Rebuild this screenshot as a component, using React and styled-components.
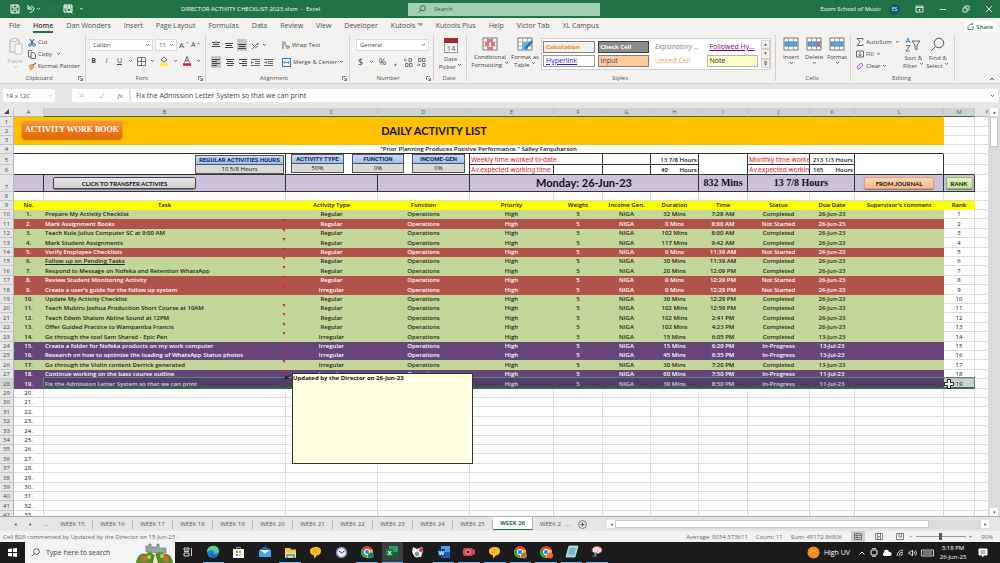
import React from "react";
import styled, { createGlobalStyle } from "styled-components";

/* ===== Global ===== */
const GlobalStyle = createGlobalStyle`
  * {
    box-sizing: border-box;
  }
  body {
    margin: 0;
    font-family: "Open Sans", "Noto Sans", sans-serif;
    font-size: 6px;
    line-height: 8px;
    color: #444;
  }
  button, input, select {
    font: inherit;
    color: inherit;
    padding: 0;
    margin: 0;
    border: none;
    background: none;
  }
  button {
    white-space: nowrap;
  }
`;

const Page = styled.div`
  display: flex;
  flex-direction: column;
  height: 100vh;
  background: #e6e6e6;
  overflow: hidden;
`;

/* ===== Title bar ===== */
const TitleBar = styled.header`
  display: grid;
  grid-template-columns: 9fr 11fr 3fr 7fr 10fr;
  flex: none;
  height: 18px;
  background: #217346;
  color: #fff;
  align-items: center;
`;

const QuickAccess = styled.div`
  display: flex;
  align-items: center;
  grid-column: 1;
  grid-row: 1;
  gap: 6px;
  padding-left: 10px;
`;

const FileName = styled.h1`
  grid-column: 1 / 4;
  grid-row: 1;
  margin: 0;
  padding-left: 181px;
  font-size: 6px;
  font-weight: 400;
  white-space: nowrap;
`;

const SearchBox = styled.label`
  display: flex;
  align-items: center;
  grid-column: 1 / 6;
  grid-row: 1;
  width: 192px;
  height: 13px;
  margin-left: 408px;
  padding-left: 10px;
  gap: 8px;
  background: #9fd0b3;
  color: #1d5c3a;

  input {
    width: 120px;
    font-size: 6px;
  }
  input::placeholder {
    color: #1d5c3a;
    opacity: 1;
  }
`;

const Account = styled.div`
  display: flex;
  grid-column: 5;
  grid-row: 1;
  justify-content: flex-end;
  align-items: center;
  gap: 15px;
  padding-right: 7px;
  white-space: nowrap;
`;

const User = styled.span`
  display: flex;
  align-items: center;
  gap: 8px;
`;

const Avatar = styled.span`
  width: 11px;
  height: 11px;
  border-radius: 50%;
  background: #0b5c6b;
  font-size: 5px;
  line-height: 11px;
  text-align: center;
`;

const IconButton = styled.button`
  display: flex;
  align-items: center;
  justify-content: center;
`;

/* ===== Ribbon ===== */
const TabStrip = styled.nav`
  display: flex;
  align-items: center;
  flex: none;
  height: 17px;
  padding: 0 4px 0 9px;
  gap: 13px;
  background: #f3f2f1;
`;

const RibbonTab = styled.button`
  height: 13px;
  font-size: 7px;
  font-weight: ${(p) => (p.$active ? 600 : 400)};
  color: ${(p) => (p.$active ? "#333" : "#4d4d4d")};
  border-bottom: 2px solid ${(p) => (p.$active ? "#217346" : "transparent")};
`;

const ShareButton = styled.button`
  display: flex;
  align-items: center;
  gap: 2px;
  height: 11px;
  margin-left: auto;
  padding: 0 3px;
  background: #fff;
  font-size: 6px;
  font-weight: 600;
  color: #217346;
`;

const Ribbon = styled.div`
  display: flex;
  flex: none;
  height: 49px;
  background: #f3f2f1;
  border-bottom: 1px solid #d2d0ce;
`;

const Group = styled.section`
  display: flex;
  flex-direction: column;
  flex: none;
  width: ${(p) => p.$width}px;
  margin-bottom: 2px;
  border-right: 1px solid #d2d0ce;
`;

const GroupBody = styled.div`
  display: flex;
  flex: 1;
  gap: ${(p) => p.$gap || 4}px;
  padding: 0 ${(p) => p.$right || 2}px 0 ${(p) => p.$left || 6}px;
`;

const GroupFooter = styled.div`
  display: flex;
  justify-content: center;
  align-items: center;
  height: 6px;
  padding-right: 2px;
  color: #555;

  span {
    flex: 1;
    text-align: center;
  }
`;

const Stack = styled.div`
  display: flex;
  flex-direction: column;
  gap: ${(p) => p.$gap || 0}px;
  padding-top: ${(p) => p.$top || 0}px;
`;

const ToolRow = styled.div`
  display: flex;
  align-items: center;
  height: ${(p) => p.$height || 12}px;
  gap: ${(p) => p.$gap || 3}px;
`;

const Tool = styled.button`
  display: flex;
  align-items: center;
  justify-content: center;
  flex: none;
  gap: 2px;
  min-width: 9px;
  height: ${(p) => (p.$active ? 12 : 10)}px;
  padding: 0 ${(p) => (p.$active ? 1 : 0)}px;
  background: ${(p) => (p.$active ? "#c8c6c4" : "transparent")};
  font-size: ${(p) => p.$size || 6}px;
  font-weight: ${(p) => (p.$bold ? 700 : 400)};
  font-style: ${(p) => (p.$italic ? "italic" : "normal")};
  text-decoration: ${(p) => (p.$underline ? "underline" : "none")};
`;

const BigTool = styled.button`
  display: flex;
  flex-direction: column;
  align-items: center;
  flex: none;
  width: ${(p) => p.$width}px;
  padding-top: 2px;
  color: ${(p) => (p.$disabled ? "#b5b3b1" : "#444")};

  svg:first-child {
    margin-bottom: 2px;
  }
`;

const Combo = styled.select`
  appearance: none;
  width: ${(p) => p.$width}px;
  height: 12px;
  padding-left: 3px;
  border: 1px solid #dddbd9;
  background: #fff;
`;

const ComboWrap = styled.span`
  display: flex;
  align-items: center;

  svg {
    margin-left: -8px;
    margin-right: 3px;
    pointer-events: none;
  }
`;

const Gallery = styled.div`
  display: grid;
  grid-template-columns: repeat(4, 1fr) 9px;
  grid-template-rows: 14px 14px;
  width: 230px;
  height: 32px;
  margin-top: 3px;
  padding: 1px 0 1px 1px;
  column-gap: 3px;
  border: 1px solid #d2d0ce;
  background: #fff;
`;

const StyleCell = styled.button`
  height: 12px;
  margin: 1px 0;
  padding: 0 2px;
  border: ${(p) => p.$border || "1px solid transparent"};
  background: ${(p) => p.$bg || "#fff"};
  color: ${(p) => p.$color || "#222"};
  font-size: ${(p) => (p.$bold ? 6 : 7)}px;
  font-weight: ${(p) => (p.$bold ? 700 : 400)};
  font-style: ${(p) => (p.$italic ? "italic" : "normal")};
  text-decoration: ${(p) => (p.$underline ? "underline" : "none")};
  text-align: left;
  overflow: hidden;
`;

const GalleryScroll = styled.div`
  display: flex;
  flex-direction: column;
  grid-column: 5;
  grid-row: 1 / 3;

  button {
    display: flex;
    align-items: center;
    justify-content: center;
    flex: 1;
    border: 1px solid #d2d0ce;
    background: #f3f2f1;
  }
`;

const CollapseButton = styled(IconButton)`
  align-self: flex-end;
  margin: 0 5px 2px auto;
`;

/* ===== Formula bar ===== */
const FormulaBar = styled.div`
  display: flex;
  flex: none;
  height: 13px;
  margin: 5px 2px 6px 3px;
`;

const NameBox = styled.label`
  display: flex;
  align-items: center;
  width: 52px;
  margin-right: 17px;
  padding: 0 3px;
  background: #fff;

  input {
    width: 43px;
  }
`;

const FormulaTools = styled.div`
  display: flex;
  align-items: center;
  justify-content: space-around;
  width: 57px;
  margin-right: 2px;
  background: #fff;
`;

const FormulaInput = styled.label`
  display: flex;
  align-items: center;
  flex: 1;
  padding: 0 3px 0 5px;
  background: #fff;

  input {
    flex: 1;
    font-size: 7px;
  }
`;

/* ===== Sheet ===== */
const SheetArea = styled.main`
  display: flex;
  flex: 1;
  min-height: 0;
`;

const SheetView = styled.div`
  position: relative;
  flex: 1;
  min-width: 0;
  overflow: hidden;
  background: #fff;
`;

const Sheet = styled.table`
  width: calc(100% + 14px);
  table-layout: fixed;
  border-collapse: separate;
  border-spacing: 0;
  font-size: 6px;
  color: #111;
`;

const Letter = styled.th`
  height: 9px;
  padding: 0;
  background: ${(p) => (p.$on ? "#d2d2d2" : "#e6e6e6")};
  border-right: 1px solid #c6c6c6;
  border-bottom: 1px solid ${(p) => (p.$on ? "#217346" : "#b5b5b5")};
  color: ${(p) => (p.$on ? "#217346" : "#444")};
  font-weight: 400;
  line-height: 8px;
`;

const RowNumber = styled.th`
  padding: 0;
  background: ${(p) => (p.$on ? "#d2d2d2" : "#e6e6e6")};
  border-right: 1px solid #b5b5b5;
  border-bottom: 1px solid #c6c6c6;
  color: ${(p) => (p.$on ? "#217346" : "#444")};
  font-weight: 400;
  line-height: 8px;
  vertical-align: bottom;
`;

const Row = styled.tr`
  height: ${(p) => p.$height || 9}px;
`;

const Cell = styled.td`
  position: relative;
  padding: 0 1px;
  border-right: 1px solid ${(p) => p.$right || "#dcdcdc"};
  border-bottom: 1px solid ${(p) => p.$bottom || "#dcdcdc"};
  background: ${(p) => p.$bg || "#fff"};
  color: ${(p) => p.$color || "#111"};
  font-size: ${(p) => p.$size || 6}px;
  font-weight: ${(p) => p.$weight || 400};
  font-family: ${(p) => (p.$face ? p.$face : "inherit")};
  line-height: ${(p) => p.$line || 8}px;
  text-align: ${(p) => p.$align || "center"};
  text-decoration: ${(p) => (p.$underline ? "underline" : "none")};
  vertical-align: ${(p) => (p.$line ? "middle" : "bottom")};
  white-space: pre;
  overflow: hidden;
`;

/* The small red corner shown on a cell that carries a comment */
const CommentMark = styled.span`
  position: absolute;
  top: 0;
  right: 0;
  border-top: 3px solid #e0202a;
  border-left: 3px solid transparent;
`;

const Split = styled.span`
  display: flex;
  justify-content: space-between;
  padding-left: ${(p) => p.$left}px;
`;

const Gauges = styled.div`
  display: flex;
  justify-content: ${(p) => (p.$end ? "flex-end" : "flex-start")};
  gap: 8px;
  padding: 0 0 ${(p) => (p.$end ? 0 : 1)}px ${(p) => (p.$end ? 0 : 4)}px;
`;

const Gauge = styled.div`
  width: ${(p) => p.$width}px;
  border: 1px solid #555;
  background: #d9d9d9;

  strong {
    display: block;
    background: linear-gradient(#c9dcf8, #9dbfee);
    border-bottom: 1px solid #555;
    color: #14284f;
    font-family: Roboto, sans-serif;
  }
`;

const WorkbookButton = styled.button`
  position: absolute;
  left: 8px;
  top: 4px;
  width: 100px;
  height: 18px;
  border-radius: 3px;
  background: linear-gradient(#f79646, #ee7411 60%, #dd6a10);
  box-shadow: 0 1px 2px rgba(120, 60, 0, 0.6);
  color: #fff;
  font-family: "Liberation Serif", serif;
  font-size: 8px;
  font-weight: 700;
`;

const MacroButton = styled.button`
  display: block;
  width: ${(p) => p.$width}px;
  height: 12px;
  margin: 0 auto 0 ${(p) => (p.$left ? `${p.$left}px` : "auto")};
  border: 1px solid ${(p) => p.$edge || "#444"};
  border-radius: 2px;
  background: ${(p) => p.$fill};
  box-shadow: 0 1px 1px rgba(0, 0, 0, 0.4);
  font-family: Lato, sans-serif;
  font-weight: 700;
`;

const Note = styled.aside`
  position: absolute;
  left: 292px;
  top: 265px;
  width: 181px;
  height: 91px;
  border: 1px solid #333;
  background: #ffffe1;
  color: #111;
  font-weight: 700;
`;

const NoteArrow = styled.svg`
  position: absolute;
  left: 284px;
  top: 266px;
`;

const Pointer = styled.svg`
  position: absolute;
  left: 944px;
  top: 271px;
`;

/* Selected range outline, drawn over the last task row */
const Selection = styled.div`
  position: absolute;
  left: 43px;
  top: 269px;
  width: 932px;
  height: 12px;
  border: 1px solid #4d8a78;
  border-bottom: 2px solid #217346;
  background: rgba(20, 40, 40, 0.22);
`;

const VScroll = styled.div`
  display: flex;
  flex-direction: column;
  align-items: center;
  width: 12px;
  background: #dcdcdc;

  button {
    display: flex;
    align-items: center;
    justify-content: center;
    width: 8px;
    height: 8px;
    background: #fff;
  }
  button:last-child {
    margin-top: auto;
  }
`;

const VThumb = styled.div`
  width: 8px;
  height: 30px;
  margin-top: 1px;
  background: #fff;
  border: 1px solid #c6c6c6;
`;

/* ===== Sheet tabs and status ===== */
const SheetTabs = styled.nav`
  display: flex;
  align-items: center;
  flex: none;
  height: 15px;
  border-top: 1px solid #ababab;
  color: #555;
`;

const TabArrows = styled.div`
  display: flex;
  align-items: center;
  justify-content: space-between;
  width: 53px;
  padding: 0 5px 0 13px;
`;

const SheetTab = styled.button`
  width: 40px;
  height: ${(p) => (p.$active ? 13 : 9)}px;
  align-self: ${(p) => (p.$active ? "flex-start" : "center")};
  border-right: 1px solid #b5b5b5;
  border-bottom: ${(p) => (p.$active ? "1px solid #217346" : "none")};
  background: ${(p) => (p.$active ? "#fff" : "transparent")};
  color: ${(p) => (p.$active ? "#217346" : "#555")};
  font-weight: ${(p) => (p.$active ? 700 : 400)};
`;

const TabMore = styled.div`
  display: flex;
  align-items: center;
  gap: 8px;
  padding: 0 20px 0 7px;
`;

const HScroll = styled.div`
  display: flex;
  align-items: center;
  flex: 1;
  height: 9px;
  margin-right: 11px;
  background: #dcdcdc;

  button {
    width: 8px;
    height: 8px;
    background: #fff;
    display: flex;
    align-items: center;
    justify-content: center;
  }
`;

const HThumb = styled.div`
  flex: 1;
  height: 8px;
  margin-right: 52px;
  border: 1px solid #c6c6c6;
  background: #fff;
`;

const StatusBar = styled.footer`
  display: flex;
  align-items: center;
  flex: none;
  height: 11px;
  padding: 0 7px 0 3px;
  background: #f3f2f1;
  color: #666;
`;

const StatusRight = styled.div`
  display: flex;
  align-items: center;
  gap: ${(p) => p.$gap}px;
  margin-left: ${(p) => p.$left || "auto"};
`;

const ViewButton = styled.button`
  display: flex;
  align-items: center;
  justify-content: center;
  width: 14px;
  height: 11px;
  background: ${(p) => (p.$active ? "#cfcdcb" : "transparent")};
`;

const Zoom = styled.input`
  appearance: none;
  width: 50px;
  height: 9px;
  background: linear-gradient(#999, #999) center / 100% 1px no-repeat;

  &::-webkit-slider-thumb {
    appearance: none;
    width: 3px;
    height: 7px;
    background: #555;
  }
`;

/* ===== Taskbar ===== */
const Taskbar = styled.div`
  display: flex;
  align-items: stretch;
  flex: none;
  height: 21px;
  background: #1b1b1b;
  color: #fff;
`;

const StartButton = styled(IconButton)`
  width: 25px;
`;

const TaskSearch = styled.label`
  display: flex;
  align-items: center;
  gap: 6px;
  width: 150px;
  padding-left: 6px;
  background: #f3f3f3;
  color: #444;

  input {
    width: 84px;
    font-size: 7px;
  }
  input::placeholder {
    color: #444;
    opacity: 1;
  }
`;

const Apps = styled.div`
  display: grid;
  grid-template-columns: repeat(17, 1fr);
  width: 435px;
`;

const AppButton = styled.button`
  display: flex;
  align-items: center;
  justify-content: center;
  margin: 0 2px;
  background: ${(p) => (p.$active ? "#3d3d3d" : "transparent")};
  border-bottom: 1px solid ${(p) => (p.$running ? "#76b9ed" : "transparent")};
`;

const Tray = styled.div`
  display: flex;
  align-items: center;
  gap: 4px;
  margin-left: auto;
  padding-right: 12px;
`;

const Weather = styled.span`
  display: flex;
  align-items: center;
  gap: 4px;
  margin-right: 4px;
  font-size: 7px;
`;

const Clock = styled.time`
  width: 30px;
  margin: 0 6px 0 0;
  line-height: 9px;
  text-align: center;
  white-space: nowrap;
`;

/* ===== Icons ===== */
const Svg = ({ w = 10, h = w, box = `0 0 ${w} ${h}`, children }) => (
  <svg
    width={w}
    height={h}
    viewBox={box}
    fill="none"
    stroke="currentColor"
    strokeWidth="1"
    aria-hidden="true"
  >
    {children}
  </svg>
);

const Caret = () => (
  <Svg w={5} h={4}>
    <path d="M1 1l1.500 1.500L4 1" strokeWidth=".8" />
  </Svg>
);

const Triangle = ({ d }) => (
  <Svg w={5}>
    <path d={d} fill="#444" stroke="none" />
  </Svg>
);

const Launcher = () => (
  <Svg w={5}>
    <path d="M.5 4V.5H4M2 2l2.500 2.500M4.500 2v2.500H2" strokeWidth=".7" />
  </Svg>
);

const Magnifier = ({ size = 9, stroke = 1 }) => (
  <Svg w={size} box="0 0 10 10">
    <circle cx="6" cy="4" r="3.2" strokeWidth={stroke} />
    <path d="M3.7 6.3L.7 9.3" strokeWidth={stroke} />
  </Svg>
);

const Lines = ({ rows }) => (
  <Svg w={8} h={9}>
    {rows.map(([x, y, len]) => (
      <path key={y} d={`M${x} ${y}.5h${len}`} />
    ))}
  </Svg>
);

const Indent = ({ flip }) => (
  <Svg w={9}>
    <path d="M0 1.500h9M4 3.500h5M4 5.500h5M0 7.500h9" strokeWidth=".8" />
    <path d={flip ? "M0 4.500h3M2 3l1 1.500L2 6" : "M3 4.500H0M1 3L0 4.500 1 6"} stroke="#2a7ab8" strokeWidth=".8" />
  </Svg>
);

const GridIcon = ({ children }) => (
  <Svg w={16} h={14}>
    <rect x="1" y="1" width="14" height="12" fill="#fff" stroke="#777" />
    <path d="M1 5h14M1 9h14M5.500 1v12M10.500 1v12" stroke="#888" strokeWidth=".7" />
    {children}
  </Svg>
);

const Chrome = ({ badge }) => (
  <Svg w={14}>
    <circle cx="7" cy="7" r="6" fill="#e8453c" stroke="none" />
    <path d="M7 7L1.800 4A6 6 0 0 0 7 13z" fill="#2da94f" stroke="none" />
    <path d="M7 7v6a6 6 0 0 0 5.600-8.200L7 4.800z" fill="#fdbd00" stroke="none" />
    <circle cx="7" cy="7" r="2.700" fill="#4285f4" stroke="#fff" />
    {badge && <circle cx="11" cy="10.500" r="3" fill={badge} stroke="none" />}
  </Svg>
);

const Bubble = () => (
  <Svg w={13}>
    <path d="M1 5c0-3 3-4 6-4s5 1 5 4-2 4-4 4.500L5 12.500V9.500C2 9 1 7 1 5z" fill="#f7bd2d" stroke="none" />
    <path d="M4 4h5M4 6h3" stroke="#c98b0c" strokeWidth=".7" />
  </Svg>
);

/* ===== Data ===== */
const widths = [14, 30, 242, 92, 92, 84, 49, 48, 48, 49, 62, 45, 89, 31];
const letters = ["A", "B", "C", "D", "E", "F", "G", "H", "I", "J", "K", "L", "M", "N"];
const headings = [
  "No.", "Task", "Activity Type", "Function", "Priority", "Weight", "Income Gen.",
  "Duration", "Time", "Status", "Due Date", "Supervisor's comment", "Rank",
];

const fills = {
  Completed: { bg: "#c4d79b", color: "#1c2410" },
  "Not Started": { bg: "#b1524b", color: "#fff" },
  "In-Progress": { bg: "#67457b", color: "#fff" },
};

const R = "Regular";
const I = "Irregular";
const tasks = [
  ["Prepare My Activity Checklist", R, "32 Mins", "7:28 AM", "Completed", "26-Jun-23", 0],
  ["Mark Assignment Books", R, "0 Mins", "8:00 AM", "Not Started", "26-Jun-23", 1],
  ["Teach Kule Julius Computer SC at 9:00 AM", R, "102 Mins", "8:00 AM", "Completed", "26-Jun-23", 1],
  ["Mark Student Assignments", R, "117 Mins", "9:42 AM", "Completed", "26-Jun-23", 1],
  ["Verify Employee Checklists", R, "0 Mins", "11:39 AM", "Not Started", "26-Jun-23", 1],
  ["Follow up on Pending Tasks", R, "30 Mins", "11:39 AM", "Completed", "26-Jun-23", 1],
  ["Respond to Message on Nofeka and Retention WhatsApp", R, "20 Mins", "12:09 PM", "Completed", "26-Jun-23", 1],
  ["Review Student Monitoring Activity", R, "0 Mins", "12:29 PM", "Not Started", "26-Jun-23", 1],
  ["Create a user's guide for the follow up system", I, "0 Mins", "12:29 PM", "Not Started", "26-Jun-23", 1],
  ["Update My Activity Checklist", R, "30 Mins", "12:29 PM", "Completed", "26-Jun-23", 0],
  ["Teach Mubiru Joshua Production Short Course at 10AM", R, "102 Mins", "12:59 PM", "Completed", "26-Jun-23", 1],
  ["Teach Edwin Shalom Abiine Sound at 12PM", R, "102 Mins", "2:41 PM", "Completed", "26-Jun-23", 1],
  ["Offer Guided Practice to Wampamba Francis", R, "102 Mins", "4:23 PM", "Completed", "26-Jun-23", 1],
  ["Go through the tool Sam Shared - Epic Pen", I, "15 Mins", "6:05 PM", "Completed", "13-Jun-23", 1],
  ["Create a folder for Nofeka products on my work computer", I, "15 Mins", "6:20 PM", "In-Progress", "13-Jul-23", 1],
  ["Research on how to optimize the loading of WhatsApp Status photos", I, "45 Mins", "6:35 PM", "In-Progress", "13-Jul-23", 1],
  ["Go through the Violin content Derrick generated", I, "30 Mins", "7:20 PM", "Completed", "13-Jun-23", 1],
  ["Continue working on the bass course outline", I, "60 Mins", "7:50 PM", "In-Progress", "11-Jul-23", 1],
  ["Fix the Admission Letter System so that we can print", I, "30 Mins", "8:50 PM", "In-Progress", "11-Jul-23", 0],
];

const weeks = [15, 16, 17, 18, 19, 20, 21, 22, 23, 24, 25, 26];
const black = "#333";
const red = "#e8202a";
const lavender = "#ccc0da";
const lato = "Lato, sans-serif";
const roboto = "Roboto, sans-serif";
const serif = '"Liberation Serif", serif';
/* Two rows in every five take the extra pixel of the 90% zoom */
const rowHeight = (i) => (i % 5 === 1 || i % 5 === 3 ? 10 : 9);

/* ===== Sections ===== */
function Header() {
  return (
    <TitleBar>
      <FileName>DIRECTOR ACTIVITY CHECKLIST-2023.xlsm&nbsp; -&nbsp; Excel</FileName>
      <QuickAccess>
        <IconButton aria-label="Save">
          <Svg w={10}><path d="M1 1h7l1 1v7H1zM3 1v3h4V1M3 9V6h4v3" /></Svg>
        </IconButton>
        <IconButton aria-label="Undo">
          <Svg w={10}><path d="M2 1v4h4M2 5c2-3 6-3 6 0 0 2-2 2-4 4" /></Svg>
          <Caret />
        </IconButton>
        <IconButton aria-label="Redo">
          <Svg w={10}><path d="M8 1v4H4M8 5C6 2 2 2 2 5c0 2 2 2 4 4" stroke="#2d7d52" /></Svg>
        </IconButton>
        <IconButton aria-label="Preview">
          <Svg w={10}><path d="M1 1h8v7H1zM1 3h8M3 1v5M6 1v3" /><circle cx="6" cy="6" r="2" /><path d="M7.500 7.500L9.500 9.500" /></Svg>
        </IconButton>
        <IconButton aria-label="Customize"><Caret /></IconButton>
      </QuickAccess>
      <SearchBox>
        <Magnifier size={8} />
        <input placeholder="Search" aria-label="Search" />
      </SearchBox>
      <Account>
        <User>Esom School of Music <Avatar>ES</Avatar></User>
        <IconButton aria-label="Ribbon options">
          <Svg w={9} h={8}><path d="M1 1h7v6H1zM1 2.500h7M4.500 6V4M3.500 5l1-1 1 1" strokeWidth=".8" /></Svg>
        </IconButton>
        <IconButton aria-label="Minimize"><Svg w={8}><path d="M1 4.500h6" /></Svg></IconButton>
        <IconButton aria-label="Restore"><Svg w={8}><path d="M1 3h4v4H1zM3 3V1h4v4H5" strokeWidth=".8" /></Svg></IconButton>
        <IconButton aria-label="Close"><Svg w={8}><path d="M1 1l6 6M7 1L1 7" strokeWidth=".8" /></Svg></IconButton>
      </Account>
    </TitleBar>
  );
}

const ribbonTabs = [
  "File", "Home", "Dan Wonders", "Insert", "Page Layout", "Formulas", "Data", "Review", "View",
  "Developer", "Kutools ™", "Kutools Plus", "Help", "Victor Tab", "XL Campus",
];

function RibbonGroup({ name, width, launcher, children, ...body }) {
  return (
    <Group $width={width}>
      <GroupBody {...body}>{children}</GroupBody>
      <GroupFooter>
        <span>{name}</span>
        {launcher && <Launcher />}
      </GroupFooter>
    </Group>
  );
}

function RibbonBar() {
  return (
    <>
      <TabStrip>
        {ribbonTabs.map((t) => (
          <RibbonTab key={t} $active={t === "Home"}>{t}</RibbonTab>
        ))}
        <ShareButton>
          <Svg w={7}><path d="M1 3v3.500h5V3M2 3c0-1 2-2 4-2M5 0l1 1-1 1" strokeWidth=".8" /></Svg>
          Share
        </ShareButton>
      </TabStrip>
      <Ribbon>
        <RibbonGroup name="Clipboard" width={86} launcher $left={6}>
          <BigTool $width={18} $disabled>
            <Svg w={16} h={18}>
              <path d="M3 3h9v4M3 3v12h5" stroke="#c4c2c0" strokeWidth="1.500" />
              <path d="M5 1.500h5v3H5zM8 7h7v10H8z" stroke="#c4c2c0" fill="#f8f8f8" />
            </Svg>
            Paste
            <Caret />
          </BigTool>
          <Stack $top={1}>
            <ToolRow>
              <Tool>
                <Svg w={8} h={9}><path d="M2 1l3 5M6 1L3 6" /><circle cx="2" cy="7" r="1.300" stroke="#2a7ab8" /><circle cx="6" cy="7" r="1.300" stroke="#2a7ab8" /></Svg>
                Cut
              </Tool>
            </ToolRow>
            <ToolRow>
              <Tool>
                <Svg w={8} h={9}><path d="M3 7H.5V.5h4M3 2.500h2.500l2 2v4H3z" strokeWidth=".8" /></Svg>
                Copy&nbsp; <Caret />
              </Tool>
            </ToolRow>
            <ToolRow>
              <Tool>
                <Svg w={8} h={9}><path d="M1 4l3-2 2 3-3 3z" fill="#f0a848" stroke="#c9802a" strokeWidth=".7" /><path d="M5 3l3-2" /></Svg>
                Format Painter
              </Tool>
            </ToolRow>
          </Stack>
        </RibbonGroup>

        <RibbonGroup name="Font" width={120} launcher $left={3}>
          <Stack $top={4} $gap={4}>
            <ToolRow $gap={2}>
              <ComboWrap>
                <Combo $width={64} aria-label="Font" defaultValue="Calibri"><option>Calibri</option></Combo>
                <Caret />
              </ComboWrap>
              <ComboWrap>
                <Combo $width={22} aria-label="Font size" defaultValue="11"><option>11</option></Combo>
                <Caret />
              </ComboWrap>
              <Tool $size={8} aria-label="Increase font size">A<sup>ˆ</sup></Tool>
              <Tool $size={7} aria-label="Decrease font size">A<sup>ˇ</sup></Tool>
            </ToolRow>
            <ToolRow $gap={4}>
              <Tool $bold $size={7}>B</Tool>
              <Tool $italic $size={7}>I</Tool>
              <Tool $underline $size={7}>U</Tool>
              <Caret />
              <Tool aria-label="Borders">
                <Svg w={9}><path d="M.5.5h8v8h-8zM4.500 0v9M0 4.500h9" strokeWidth=".7" /></Svg>
              </Tool>
              <Caret />
              <Tool aria-label="Fill color">
                <Svg w={10}><path d="M2 4l3-3 3 3-3 2z" strokeWidth=".8" /><path d="M1 8.500h8" stroke="#ffee00" strokeWidth="2.500" /></Svg>
              </Tool>
              <Caret />
              <Tool aria-label="Font color">
                <Svg w={10}><path d="M2.500 6.500L5 .5l2.500 6M3.300 4.500h3.400" strokeWidth=".8" /><path d="M1 8.500h8" stroke="#e8112d" strokeWidth="2.500" /></Svg>
              </Tool>
              <Caret />
            </ToolRow>
          </Stack>
        </RibbonGroup>

        <RibbonGroup name="Alignment" width={144} launcher $left={5} $gap={9}>
          <Stack $top={4} $gap={5}>
            <ToolRow $gap={4}>
              <Tool aria-label="Top align"><Lines rows={[[0, 1, 8], [1, 3, 6], [0, 5, 8]]} /></Tool>
              <Tool aria-label="Middle align"><Lines rows={[[0, 2, 8], [1, 4, 6], [0, 6, 8]]} /></Tool>
              <Tool $active aria-label="Bottom align"><Lines rows={[[0, 3, 8], [1, 5, 6], [0, 7, 8]]} /></Tool>
              <Tool aria-label="Orientation">
                <Svg w={9}><path d="M1 8l6-6M7 2v2M1 3l2 2M4 7l3-2" strokeWidth=".8" /></Svg>
                <Caret />
              </Tool>
            </ToolRow>
            <ToolRow $gap={4}>
              <Tool $active aria-label="Align left"><Lines rows={[[0, 1, 8], [0, 3, 5], [0, 5, 8], [0, 7, 5]]} /></Tool>
              <Tool aria-label="Center"><Lines rows={[[0, 1, 8], [1, 3, 6], [0, 5, 8], [1, 7, 6]]} /></Tool>
              <Tool aria-label="Align right"><Lines rows={[[0, 1, 8], [3, 3, 5], [0, 5, 8], [3, 7, 5]]} /></Tool>
              <Tool aria-label="Decrease indent"><Indent /></Tool>
              <Tool aria-label="Increase indent"><Indent flip /></Tool>
            </ToolRow>
          </Stack>
          <Stack $top={4} $gap={5}>
            <ToolRow>
              <Tool>
                <Svg w={8}><path d="M1 0v8M3 1v3M3 5h3c2 0 2 2 0 2H4" strokeWidth=".8" /></Svg>
                Wrap Text
              </Tool>
            </ToolRow>
            <ToolRow>
              <Tool>
                <Svg w={9}><rect x=".5" y=".5" width="8" height="8" stroke="#2a7ab8" /><path d="M2 4.500h5M3 3L1.500 4.500 3 6M6 3l1.500 1.500L6 6" stroke="#2a7ab8" strokeWidth=".7" /></Svg>
                Merge &amp; Center <Caret />
              </Tool>
            </ToolRow>
          </Stack>
        </RibbonGroup>

        <RibbonGroup name="Number" width={84} launcher $left={6}>
          <Stack $top={4} $gap={5}>
            <ToolRow>
              <ComboWrap>
                <Combo $width={73} aria-label="Number format" defaultValue="General"><option>General</option></Combo>
                <Caret />
              </ComboWrap>
            </ToolRow>
            <ToolRow $gap={4}>
              <Tool $size={9}>$</Tool>
              <Caret />
              <Tool $size={9}>%</Tool>
              <Tool $size={9} $bold>,</Tool>
              <Tool aria-label="Increase decimal">
                <Svg w={9}><path d="M3 2H0M1.500.5L0 2l1.500 1.500" stroke="#2a7ab8" strokeWidth=".8" /><path d="M5 .5h2.500v3H5zM1.500 5.500H4v3H1.500zM5.500 5.500H8v3H5.500z" strokeWidth=".7" /></Svg>
              </Tool>
              <Tool aria-label="Decrease decimal">
                <Svg w={9}><path d="M0 7h3M1.500 5.500L3 7 1.500 8.500" stroke="#2a7ab8" strokeWidth=".8" /><path d="M1.500.5H4v3H1.500zM5.500.5H8v3H5.500zM5.500 5.500H8v3H5.500z" strokeWidth=".7" /></Svg>
              </Tool>
            </ToolRow>
          </Stack>
        </RibbonGroup>

        <RibbonGroup name="Date" width={33} $left={2} $right={1}>
          <BigTool $width={29}>
            <Svg w={14} h={16}>
              <rect x=".5" y="1.500" width="13" height="14" fill="#fff" stroke="#999" />
              <path d="M0 3.500h14" stroke="#a4262c" strokeWidth="5" />
              <text x="7" y="13.500" fontSize="8" textAnchor="middle" fill="#555" stroke="none">14</text>
            </Svg>
            Date
            <span>Picker <Caret /></span>
          </BigTool>
        </RibbonGroup>

        <RibbonGroup name="Styles" width={309} $left={4} $gap={2}>
          <BigTool $width={38}>
            <GridIcon><path d="M5 2h5v3H5zM3 5h4v4H3zM9 5h4v4H9zM6 10h5v3H6z" fill="#e8707c" stroke="none" /></GridIcon>
            Conditional
            <span>Formatting <Caret /></span>
          </BigTool>
          <BigTool $width={28}>
            <GridIcon><path d="M5 5h10v4H5zM5 9h5v4H5z" fill="#69b1e0" stroke="none" /><path d="M15 4L8 12" stroke="#1f6fae" strokeWidth="2" /></GridIcon>
            Format as
            <span>Table <Caret /></span>
          </BigTool>
          <Gallery>
            <StyleCell $bg="#f2f2f2" $color="#fa7d00" $border="1px solid #7f7f7f" $bold>Calculation</StyleCell>
            <StyleCell $bg="#8c8c8c" $color="#fff" $border="1px solid #3f3f3f" $bold>Check Cell</StyleCell>
            <StyleCell $color="#7f7f7f" $italic>Explanatory ...</StyleCell>
            <StyleCell $color="#800080" $underline>Followed Hy...</StyleCell>
            <GalleryScroll>
              <button aria-label="Scroll up"><Triangle d="M2.500 1.500L4 3.500H1z" /></button>
              <button aria-label="Scroll down"><Triangle d="M2.500 3.500L4 1.500H1z" /></button>
              <button aria-label="More styles"><Triangle d="M2.500 4.500L4 2.500H1zM1 .5h3v1H1z" /></button>
            </GalleryScroll>
            <StyleCell $color="#2222dd" $border="1px solid #999" $underline>Hyperlink</StyleCell>
            <StyleCell $bg="#ffcc99" $color="#3f3f76" $border="1px solid #7f7f7f">Input</StyleCell>
            <StyleCell $color="#fa9d4b">Linked Cell</StyleCell>
            <StyleCell $bg="#ffffcc" $border="1px solid #b2b2b2">Note</StyleCell>
          </Gallery>
        </RibbonGroup>

        <RibbonGroup name="Cells" width={75} $left={4} $gap={1} $right={1}>
          {["Insert", "Delete", "Format"].map((name) => (
            <BigTool key={name} $width={22}>
              <GridIcon>
                <path d="M2 5h12v4H2z" fill="#58a6dc" stroke="#2a7ab8" strokeWidth=".6" />
                {name === "Delete" && <path d="M10 5l5 6M15 5l-5 6" stroke="#e05a4e" />}
              </GridIcon>
              {name}
              <Caret />
            </BigTool>
          ))}
        </RibbonGroup>

        <RibbonGroup name="Editing" width={104} $left={5} $gap={2} $right={1}>
          <Stack $top={1}>
            <ToolRow>
              <Tool><Svg w={8}><path d="M7 2V.5H1L4 4 1 7.500h6V6" strokeWidth=".8" /></Svg>AutoSum&nbsp; <Caret /></Tool>
            </ToolRow>
            <ToolRow>
              <Tool><Svg w={8}><path d="M.5 1h7v6h-7z" strokeWidth=".8" /><path d="M4 2v4M2.500 4.500L4 6l1.500-1.500" stroke="#2a7ab8" /></Svg>Fill <Caret /></Tool>
            </ToolRow>
            <ToolRow>
              <Tool><Svg w={8}><path d="M1 5l4-4 2 2-4 4H2z" fill="#f1dcf3" stroke="#9b4aa5" strokeWidth=".8" /></Svg>Clear <Caret /></Tool>
            </ToolRow>
          </Stack>
          <BigTool $width={22}>
            <Svg w={16} h={15}>
              <path d="M1 6l2-5 2 5M1.700 4.500h2.600" stroke="#2a7ab8" strokeWidth=".8" />
              <path d="M1 8.500h4L1 14h4" strokeWidth=".8" />
              <path d="M7 4h8l-3 4v5l-2-1.500V8z" strokeWidth=".8" />
            </Svg>
            Sort &amp;
            <span>Filter <Caret /></span>
          </BigTool>
          <BigTool $width={23}>
            <Magnifier size={15} stroke={0.6} />
            Find &amp;
            <span>Select <Caret /></span>
          </BigTool>
        </RibbonGroup>
        <CollapseButton aria-label="Collapse ribbon">
          <Svg w={6} h={4}><path d="M1 3l2-2 2 2" /></Svg>
        </CollapseButton>
      </Ribbon>
    </>
  );
}

function SummaryRows() {
  const box = { $right: black, $bottom: black };
  const label = { ...box, $align: "left", $color: red, $face: roboto, $size: 7 };
  const band = { ...box, $bg: lavender, $line: 12 };
  const amber = { $bg: "#ffc000", $right: "#ffc000", $bottom: "#ffc000" };
  return (
    <>
      <Row $height={10}>
        <RowNumber>1</RowNumber>
        <Cell colSpan={11} rowSpan={3} {...amber} $face={lato} $size={11} $line={12} $weight={700}>
          <WorkbookButton>ACTIVITY WORK BOOK</WorkbookButton>
          DAILY ACTIVITY LIST
        </Cell>
        <Cell rowSpan={3} {...amber} />
        <Cell /><Cell />
      </Row>
      <Row><RowNumber>2</RowNumber><Cell /><Cell /></Row>
      <Row><RowNumber>3</RowNumber><Cell /><Cell /></Row>
      <Row>
        <RowNumber>4</RowNumber>
        <Cell colSpan={12} $bottom={black} $right="#fff" $weight={600}>"Prior Planning Produces Positive Performance." Salley Farquharson</Cell>
        <Cell /><Cell />
      </Row>
      <Row $height={10}>
        <RowNumber>5</RowNumber>
        <Cell colSpan={2} rowSpan={2} {...box}>
          <Gauges $end>
            <Gauge $width={89}><strong>REGULAR ACTIVITIES HOURS</strong>10 5/8 Hours</Gauge>
          </Gauges>
        </Cell>
        <Cell colSpan={2} rowSpan={2} {...box}>
          <Gauges>
            <Gauge $width={53}><strong>ACTIVITY TYPE</strong>50%</Gauge>
            <Gauge $width={52}><strong>FUNCTION</strong>0%</Gauge>
            <Gauge $width={53}><strong>INCOME-GEN</strong>0%</Gauge>
          </Gauges>
        </Cell>
        <Cell colSpan={2} {...label}>Weekly time worked to-date</Cell>
        <Cell {...box} />
        <Cell {...box} $weight={600} $align="right">13 7/8 Hours</Cell>
        <Cell rowSpan={2} {...box} />
        <Cell {...label}>Monthly time worke</Cell>
        <Cell {...box} $weight={600} $align="right">213 1/3 Hours</Cell>
        <Cell rowSpan={2} {...box} />
        <Cell /><Cell />
      </Row>
      <Row $height={10}>
        <RowNumber>6</RowNumber>
        <Cell {...label}>Av.expected working time</Cell>
        <Cell {...box} />
        <Cell {...box} />
        <Cell {...box} $weight={600}><Split $left={9}><span>40</span><span>Hours</span></Split></Cell>
        <Cell {...label}>Av.expected working</Cell>
        <Cell {...box} $weight={600}><Split $left={2}><span>165</span><span>Hours</span></Split></Cell>
        <Cell $bottom={black} /><Cell />
      </Row>
      <Row $height={17}>
        <RowNumber>7</RowNumber>
        <Cell {...band} />
        <Cell {...band}>
          <MacroButton $width={143} $left={8} $fill="linear-gradient(#e6e6e6, #cfcfcf)">CLICK TO TRANSFER ACTIVIES</MacroButton>
        </Cell>
        <Cell {...band} />
        <Cell {...band} />
        <Cell colSpan={4} {...band} $weight={700} $face={lato} $size={11}>Monday: 26-Jun-23</Cell>
        <Cell {...band} $weight={700} $face={serif} $size={10}>832 Mins</Cell>
        <Cell colSpan={2} {...band} $weight={700} $face={serif} $size={10}>13 7/8 Hours</Cell>
        <Cell {...band}>
          <MacroButton $width={70} $edge="#e0a070" $fill="linear-gradient(#fcd5b5, #f9b98a)">FROM JOURNAL</MacroButton>
        </Cell>
        <Cell {...band}>
          <MacroButton $width={27} $edge="#93b86a" $fill="linear-gradient(#e0f5c0, #c3e596)">RANK</MacroButton>
        </Cell>
        <Cell />
      </Row>
      <Row>
        <RowNumber>8</RowNumber>
        {letters.map((l) => <Cell key={l} />)}
      </Row>
      <Row>
        <RowNumber>9</RowNumber>
        {headings.map((h) => <Cell key={h} $bg="#ffff00" $right="#ffff00" $bottom="#ffff00" $weight={600}>{h}</Cell>)}
        <Cell />
      </Row>
    </>
  );
}

function TaskRow({ task, index }) {
  const [name, type, duration, time, status, due, comment] = task;
  const { bg, color } = fills[status];
  const look = { $bg: bg, $right: bg, $bottom: bg, $color: color, $weight: 600 };
  return (
    <Row $height={rowHeight(index)}>
      <RowNumber $on={index === 18}>{index + 10}</RowNumber>
      <Cell {...look}>{index + 1}.</Cell>
      <Cell {...look} $align="left" $underline={index === 5}>
        {name}
        {comment ? <CommentMark /> : null}
      </Cell>
      {[type, "Operations", "High", "5", "NIGA", duration, time, status, due, ""].map((text, i) => (
        <Cell key={i} {...look}>{text}</Cell>
      ))}
      <Cell>{index + 1}</Cell>
      <Cell />
    </Row>
  );
}

function Workbook() {
  return (
    <SheetArea>
      <SheetView>
        <Sheet>
          <colgroup>
            {widths.map((w, i) => <col key={i} style={{ width: w }} />)}
            <col />
          </colgroup>
          <thead>
            <tr>
              <Letter><Triangle d="M5 0v5H0z" /></Letter>
              {letters.map((l) => <Letter key={l} $on={l !== "A" && l !== "N"}>{l}</Letter>)}
            </tr>
          </thead>
          <tbody>
            <SummaryRows />
            {tasks.map((task, i) => <TaskRow key={task[0]} task={task} index={i} />)}
            {Array.from({ length: 14 }, (_, i) => i + 19).map((i) => (
              <Row key={i} $height={rowHeight(i)}>
                <RowNumber>{i + 10}</RowNumber>
                <Cell>{i + 1}.</Cell>
                {letters.slice(1).map((l) => <Cell key={l} />)}
              </Row>
            ))}
          </tbody>
        </Sheet>
        <Selection />
        <NoteArrow width="9" height="7" viewBox="0 0 9 7">
          <path d="M8 0L3 3.500" stroke="#222" />
          <path d="M0 5l2-4 3 4z" fill="#222" />
        </NoteArrow>
        <Note>Updated by the Director on 26-Jun-23</Note>
        <Pointer width="10" height="10" viewBox="0 0 10 10">
          <path d="M3.500.5h3v3h3v3h-3v3h-3v-3h-3v-3h3z" fill="#fff" stroke="#222" />
        </Pointer>
      </SheetView>
      <VScroll>
        <button aria-label="Scroll up"><Triangle d="M2.500 1.500L4 3.500H1z" /></button>
        <VThumb />
        <button aria-label="Scroll down"><Triangle d="M2.500 3.500L4 1.500H1z" /></button>
      </VScroll>
    </SheetArea>
  );
}

function BottomBars() {
  return (
    <>
      <SheetTabs>
        <TabArrows>
          <Triangle d="M3.500 1v3L1.500 2.500z" />
          <Triangle d="M1.500 1v3l2-1.500z" />
          <span>...</span>
        </TabArrows>
        {weeks.map((w) => <SheetTab key={w} $active={w === 26}>WEEK {w}</SheetTab>)}
        <TabMore>
          <span>WEEK 2&nbsp; &nbsp;...</span>
          <Svg w={9}><circle cx="4.500" cy="4.500" r="4" strokeWidth=".7" /><path d="M4.500 2.500v4M2.500 4.500h4" /></Svg>
        </TabMore>
        <HScroll>
          <button aria-label="Scroll left"><Triangle d="M3.500 1v3L1.500 2.500z" /></button>
          <HThumb />
          <button aria-label="Scroll right"><Triangle d="M1.500 1v3l2-1.500z" /></button>
        </HScroll>
      </SheetTabs>
      <StatusBar>
        <span>Cell B28 commented by Updated by the Director on 15-Jun-23 -</span>
        <StatusRight $gap={8}>
          <span>Average: 9034.573611</span>
          <span>Count: 11</span>
          <span>Sum: 45172.86806</span>
        </StatusRight>
        <StatusRight $gap={7} $left="9px">
          <ViewButton $active aria-label="Normal view"><Svg w={8} h={7}><path d="M.5.5h7v6h-7zM0 2.500h8M0 4.500h8M3 0v7" strokeWidth=".8" /></Svg></ViewButton>
          <ViewButton aria-label="Page layout view"><Svg w={8} h={7}><path d="M.5.5h7v6h-7zM2.500 0v7M5.500 0v7M3 3.500h2" strokeWidth=".8" /></Svg></ViewButton>
          <ViewButton aria-label="Page break view"><Svg w={8} h={7}><path d="M.5.5h7v6h-7zM3 0v4M5.500 0v4M3 4h3" strokeWidth=".8" /></Svg></ViewButton>
        </StatusRight>
        <StatusRight $gap={3} $left="2px">
          <span>−</span>
          <Zoom type="range" aria-label="Zoom" defaultValue="50" />
          <span>+</span>
        </StatusRight>
        <StatusRight $left="9px">90%</StatusRight>
      </StatusBar>
    </>
  );
}

const apps = [
  ["Task view", 0, <Svg w={10}><path d="M1 1h5v2H1zM1 4.500h5M1 6h5v3H1zM8.500 1v8" strokeWidth=".8" /></Svg>],
  ["Edge", 1, <Svg w={14}><circle cx="7" cy="7" r="6" fill="#1b7fd4" stroke="none" /><path d="M1 7c0-8 12-8 12-1 0 3-4 3-5 2 1-3-4-4-7-1z" fill="#4fd08c" stroke="none" /><path d="M5 8c0 3 3 4 6 3" stroke="#0c4a94" /></Svg>],
  ["Store", 0, <Svg w={13}><path d="M1 3h11v9H1z" fill="#fff" stroke="none" /><path d="M4.500 3V1.500h4V3" stroke="#4bb4f0" /><path d="M4 5h2v2H4z" fill="#f25022" stroke="none" /><path d="M7 5h2v2H7z" fill="#7fba00" stroke="none" /><path d="M4 8h2v2H4z" fill="#00a4ef" stroke="none" /><path d="M7 8h2v2H7z" fill="#ffb900" stroke="none" /></Svg>],
  ["Mail", 0, <Svg w={14}><path d="M1 5l6-4 6 4v7H1z" fill="#1468b8" stroke="none" /><path d="M2 5h10L7 9z" fill="#fff" stroke="none" /><path d="M1 5l6 4 6-4v7H1z" fill="#37a6ee" stroke="none" /></Svg>],
  ["Explorer", 1, <Svg w={13}><path d="M1 2h5l1 1.500h5V12H1z" fill="#f6c945" stroke="none" /><path d="M1 7h11v4H1z" fill="#fce08a" stroke="none" /><path d="M3 12V9h7v3" stroke="#2f8de0" strokeWidth="1.500" /></Svg>],
  ["Chat", 0, <Bubble />],
  ["Clock", 0, <Svg w={13}><circle cx="6.500" cy="6.500" r="5" fill="#f0f0fa" stroke="#7d86b5" strokeWidth="1.500" /><path d="M4 5l2.500 2L9.500 5" stroke="#333" /></Svg>],
  ["Chrome", 1, <Chrome badge="#1d7a6b" />],
  ["Excel", 2, <Svg w={14}><path d="M4 1h9v12H4z" fill="#21a366" stroke="none" /><path d="M8 7h5v6H4V9z" fill="#185c37" stroke="none" /><path d="M1 4h7v7H1z" fill="#107c41" stroke="none" /><text x="2.500" y="9.500" fontSize="6" fontWeight="700" fill="#fff" stroke="none">X</text></Svg>],
  ["Games", 0, <Svg w={14}><path d="M2 2l4 2 5-2 1 4-2 6H4L1 7z" fill="#e9eef2" stroke="none" /><circle cx="6" cy="9" r="3" fill="#8b98a3" stroke="#fff" /><circle cx="10" cy="5" r="2" fill="#c43d3d" stroke="none" /></Svg>],
  ["Word", 1, <Svg w={14}><path d="M4 1h9v12H4z" fill="#41a5ee" stroke="none" /><path d="M4 7h9v6H4z" fill="#185abd" stroke="none" /><path d="M1 4h7v7H1z" fill="#103f91" stroke="none" /><text x="1.500" y="9.500" fontSize="6" fontWeight="700" fill="#fff" stroke="none">W</text></Svg>],
  ["Recorder", 1, <Svg w={14}><rect x="1" y="3" width="10" height="8" rx="2" fill="#e64250" stroke="none" /><path d="M10 6l3-2v6l-3-2z" fill="#e64250" stroke="none" /><circle cx="6" cy="7" r="2" fill="#2a1115" stroke="#fff" strokeWidth=".7" /></Svg>],
  ["Chat notes", 1, <Bubble />],
  ["Chrome profile", 1, <Chrome badge="#a8794e" />],
  ["Chrome work", 1, <Chrome badge="#e36a3a" />],
  ["Notepad", 1, <Svg w={14}><path d="M4 1h9l-3 11H1z" fill="#8fd0dc" stroke="#d7eef2" strokeWidth=".8" /><path d="M5 4h5M4.500 6h5M4 8h5" stroke="#3d7f92" strokeWidth=".7" /></Svg>],
  ["Snip", 1, <Svg w={14}><ellipse cx="7" cy="5" rx="5" ry="3.500" fill="#f3dfe2" stroke="#d9495c" /><path d="M3 12l5-6M6 12l-1-5" stroke="#5da3d6" /></Svg>],
];

function WindowsTaskbar() {
  return (
    <Taskbar>
      <StartButton aria-label="Start">
        <Svg w={9}><path d="M0 1l4-.5V4H0zM5 .4L9 0v4H5zM0 5h4v3.500L0 8zM5 5h4v4l-4-.5z" fill="#fff" stroke="none" /></Svg>
      </StartButton>
      <TaskSearch>
        <Magnifier />
        <input placeholder="Type here to search" aria-label="Type here to search" />
        <Svg w={38} h={21}>
          <path d="M10 10V4h3V2h2v3h6V2h2v4h7v5z" fill="#9aa7a0" stroke="#5f6d66" strokeWidth=".6" />
          <path d="M0 21c1-8 6-11 10-9 3-3 6-2 8 1 4-4 8-3 10-1 5-1 8 3 9 9z" fill="#5a8a2c" stroke="none" />
          <path d="M17 21l2-10 3 10z" fill="#f4e9c9" stroke="none" />
          <circle cx="8" cy="17" r="3" fill="#d8642a" stroke="none" />
          <circle cx="30" cy="17" r="3" fill="#d8642a" stroke="none" />
          <circle cx="13" cy="15" r="2" fill="#b7cf49" stroke="none" />
          <circle cx="26" cy="14" r="2" fill="#b7cf49" stroke="none" />
        </Svg>
      </TaskSearch>
      <Apps>
        {apps.map(([name, state, icon]) => (
          <AppButton key={name} aria-label={name} $running={state > 0} $active={state === 2}>
            {icon}
          </AppButton>
        ))}
      </Apps>
      <Tray>
        <Weather>
          <Svg w={13}><circle cx="6.500" cy="6.500" r="6" fill="#f58a1f" stroke="none" /><path d="M3 7c2-3 5-3 7 0" stroke="#ffd06b" /></Svg>
          High UV
        </Weather>
        <Svg w={8}><path d="M1.500 5.500L4 3l2.500 2.500" /></Svg>
        <Svg w={8} h={9}><rect x="1" y="2" width="6" height="5" rx="1" /><path d="M2 .5h4M2 8.500h4" strokeWidth=".7" /></Svg>
        <Svg w={10} h={8}><path d="M2 7a2 2 0 0 1 0-3.500A2.500 2.500 0 0 1 7 3a2 2 0 0 1 1 4z" fill="#fff" stroke="none" /></Svg>
        <Svg w={8}><path d="M1 7a6 6 0 0 1 6-6M3 7a4 4 0 0 1 4-4M5 7a2 2 0 0 1 2-2" strokeWidth=".8" /></Svg>
        <Svg w={9} h={8}><path d="M1 3h1.500L4.500 1v6l-2-2H1zM6 2.500q1 1.500 0 3M7.500 1.500q2 2.500 0 5" strokeWidth=".8" /></Svg>
        <Svg w={13} h={8}><path d="M.5 1h12v6H.5zM2 3h9M2 5h9" strokeWidth=".8" /></Svg>
        <Clock>3:18 PM<br />26-Jun-23</Clock>
        <Svg w={10}><path d="M1 1h8v6H6l-1.500 2V7H1z" fill="#fff" /><path d="M2.500 3h5M2.500 5h5" stroke="#333" strokeWidth=".7" /></Svg>
      </Tray>
    </Taskbar>
  );
}

function App() {
  return (
    <Page>
      <GlobalStyle />
      <Header />
      <RibbonBar />
      <FormulaBar>
        <NameBox>
          <input defaultValue="1R x 12C" aria-label="Name box" />
          <Caret />
        </NameBox>
        <FormulaTools>
          <Svg w={7}><path d="M1 1l5 5M6 1L1 6" stroke="#b5b3b1" strokeWidth=".8" /></Svg>
          <Svg w={7}><path d="M1 4l2 2 3-5" stroke="#b5b3b1" strokeWidth=".8" /></Svg>
          <em>fx</em>
        </FormulaTools>
        <FormulaInput>
          <input defaultValue="Fix the Admission Letter System so that we can print" aria-label="Formula" />
          <Caret />
        </FormulaInput>
      </FormulaBar>
      <Workbook />
      <BottomBars />
      <WindowsTaskbar />
    </Page>
  );
}

export default App;
